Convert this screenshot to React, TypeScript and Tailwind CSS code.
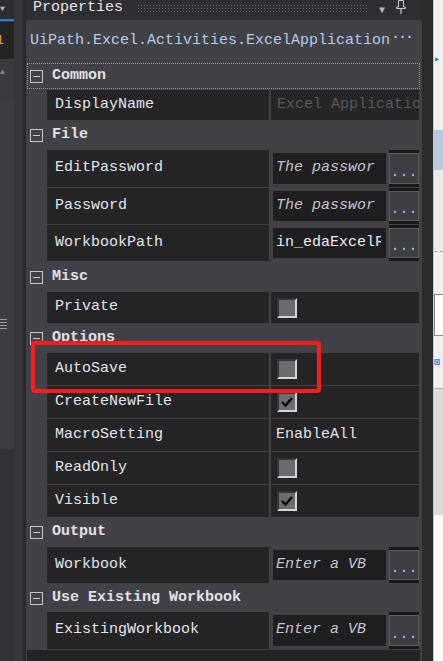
import React from "react";

const mono = { fontFamily: '"Liberation Mono", "DejaVu Sans Mono", monospace' };

function Toggle() {
  return (
    <div className="w-[13px] h-[13px] border border-[#c8c8cc] flex items-center justify-center">
      <div className="w-[7px] h-px bg-[#d0d0d4]"></div>
    </div>
  );
}

function Header({ label, h, focus }: { label: string; h: string; focus?: boolean }) {
  return (
    <div className={`shrink-0 flex items-center ${h} ${focus ? "border border-dotted border-[#9a9aa0]" : ""}`}>
      <div className={focus ? "ml-[2px]" : "ml-[3px]"}>
        <Toggle />
      </div>
      <span className="ml-[9px] font-bold text-[#e2e2e6]">{label}</span>
    </div>
  );
}

function Check({ checked }: { checked?: boolean }) {
  return (
    <div className="w-[20px] h-[20px] border-2 border-t-[#36363a] border-l-[#36363a] border-b-[#d4d4d8] border-r-[#d4d4d8] bg-[#6b6b74] flex items-center justify-center">
      {checked && (
        <svg width="14" height="12" viewBox="0 0 14 12">
          <path d="M2 6 L5.5 9.5 L12 2" stroke="#050505" strokeWidth="2.4" fill="none" />
        </svg>
      )}
    </div>
  );
}

function Row({ name, h, children }: { name: string; h: string; children?: React.ReactNode }) {
  return (
    <div className={`shrink-0 flex ${h} pb-px`}>
      <div className="w-[20px]"></div>
      <div className="w-[222px] bg-[#252526] flex items-center pl-[8px] text-[#e4e6ee]">{name}</div>
      <div className="w-[2px]"></div>
      {children}
    </div>
  );
}

function CheckValue({ checked }: { checked?: boolean }) {
  return (
    <div className="w-[148px] bg-[#252526] flex items-center pl-[6px]">
      <Check checked={checked} />
    </div>
  );
}

function TextValue({ text, italic }: { text: string; italic?: boolean }) {
  return (
    <div className="w-[148px] flex">
      <div className="ml-[2px] my-[3px] w-[113px] bg-[#1f1f20] flex items-center pl-[3px] pr-[5px]">
        <span
          className={`block w-full overflow-hidden whitespace-nowrap ${italic ? "italic text-[#c4c6d0]" : "text-[#eceef4]"}`}
        >
          {text}
        </span>
      </div>
      <div className="ml-[3px] w-[30px] bg-[#19191a] py-[3px] flex">
        <div className="flex-1 border border-[#5e5e62] bg-[#3d3d42] flex items-end justify-center pb-[3px] text-[#a8c0dc] leading-none">
          ...
        </div>
      </div>
    </div>
  );
}

export default function App() {
  return (
    <div className="relative flex w-[443px] h-[661px] overflow-hidden bg-[#2d2d30] text-[15px]" style={mono}>
      {/* left strip */}
      <div className="w-[14px] flex flex-col bg-[#3c3c41]">
        <div className="shrink-0 h-[19px] bg-[#2d2d30] flex items-start pt-[5px] text-[8px] text-[#b8b8bc] leading-none">▼</div>
        <div className="shrink-0 h-[2px] bg-[#2f7fd0]"></div>
        <div className="shrink-0 h-[37px] mt-px bg-[#232326] flex items-center text-[13px] text-[#e0a040] -ml-[4px]">1</div>
        <div className="shrink-0 h-[40px] mt-[2px] bg-[#39393e] flex items-start pt-[7px] text-[8px] text-[#8c8c92] leading-none">▲</div>
        <div className="flex-1 flex items-start">
          <div className="mt-[218px] flex flex-col gap-[2px]">
            <div className="w-[7px] h-px bg-[#9a9aa0]"></div>
            <div className="w-[7px] h-px bg-[#9a9aa0]"></div>
            <div className="w-[7px] h-px bg-[#9a9aa0]"></div>
            <div className="w-[7px] h-px bg-[#9a9aa0]"></div>
          </div>
        </div>
        <div className="shrink-0 h-[212px] bg-[#333337]"></div>
      </div>
      <div className="w-[9px] bg-[#36363b]"></div>
      <div className="w-[3px] bg-[#2a2a2e]"></div>

      {/* properties panel */}
      <div className="w-[396px] flex flex-col overflow-hidden bg-[#414148]">
        <div className="shrink-0 h-[20px] bg-[#2f2f33] flex items-start pl-[7px] pr-[8px]">
          <span className="text-[#e6e6ea] leading-[16px]">Properties</span>
          <div className="ml-[14px] mt-[4px] w-[230px] h-[8px] bg-[radial-gradient(#6c6c72_1px,transparent_1px)] bg-[length:3px_3px]"></div>
          <div className="ml-[12px] mt-[6px] text-[10px] leading-none text-[#b8b8bc]">▼</div>
          <svg className="ml-[10px]" width="12" height="15" viewBox="0 0 12 15">
            <path d="M3.5 0.5 H8.5 V7 H10.5 V8.5 H1.5 V7 H3.5 Z" fill="none" stroke="#c8c8cc" strokeWidth="1" />
            <path d="M6 8.5 V14" stroke="#c8c8cc" strokeWidth="1.2" />
          </svg>
        </div>

        <div className="shrink-0 h-[43px] flex items-center pl-[4px] text-[#b8cce6]">
          <span>UiPath.Excel.Activities.ExcelApplication</span>
          <span className="ml-[1px] -mt-[6px] text-[#d8d8e0] tracking-[-2px]">···</span>
        </div>

        <div className="flex-1 flex flex-col pl-px pr-[2px]">
          <Header label="Common" h="h-[26px]" focus />
          <Row name="DisplayName" h="h-[32px] pt-px">
            <div className="w-[148px] bg-[#252526] flex items-center pl-[6px] overflow-hidden whitespace-nowrap text-[#5a5a5e]">
              Excel Application Scope
            </div>
          </Row>

          <Header label="File" h="h-[29px]" />
          <Row name="EditPassword" h="h-[38px]">
            <TextValue text="The passwor" italic />
          </Row>
          <Row name="Password" h="h-[37px]">
            <TextValue text="The passwor" italic />
          </Row>
          <Row name="WorkbookPath" h="h-[37px]">
            <TextValue text="in_edaExcelFile" />
          </Row>

          <Header label="Misc" h="h-[30px]" />
          <Row name="Private" h="h-[32px]">
            <CheckValue />
          </Row>

          <Header label="Options" h="h-[29px]" />
          <Row name="AutoSave" h="h-[33px]">
            <CheckValue />
          </Row>
          <Row name="CreateNewFile" h="h-[33px]">
            <CheckValue checked />
          </Row>
          <Row name="MacroSetting" h="h-[33px]">
            <div className="w-[148px] bg-[#252526] flex items-center pl-[5px] text-[#e4e6ee]">EnableAll</div>
          </Row>
          <Row name="ReadOnly" h="h-[33px]">
            <CheckValue />
          </Row>
          <Row name="Visible" h="h-[33px]">
            <CheckValue checked />
          </Row>

          <Header label="Output" h="h-[29px]" />
          <Row name="Workbook" h="h-[37px]">
            <TextValue text="Enter a VB" italic />
          </Row>

          <Header label="Use Existing Workbook" h="h-[28px]" />
          <Row name="ExistingWorkbook" h="h-[38px]">
            <TextValue text="Enter a VB" italic />
          </Row>
          <div className="shrink-0 h-[20px] bg-[#232325]"></div>
        </div>
      </div>

      {/* right edge of neighbouring window */}
      <div className="w-[11px] bg-[#2b2b2e]"></div>
      <div className="w-[10px] flex flex-col bg-[#f0f0f0] border-l border-[#c8c8c8]">
        <div className="shrink-0 h-[55px]"></div>
        <div className="shrink-0 text-[10px] leading-none text-[#3a68b0]">▸</div>
        <div className="shrink-0 h-[65px]"></div>
        <div className="shrink-0 h-[40px] bg-[#b8c9de]"></div>
        <div className="shrink-0 h-[82px] bg-[#ebebeb] border-b border-dashed border-[#a0a0a8]"></div>
        <div className="shrink-0 h-[42px] mt-[42px] border border-r-0 border-[#8a8a8a] bg-[#ffffff]"></div>
        <div className="shrink-0 mt-[22px] text-[10px] leading-none text-[#3a68c8]">⊠</div>
        <div className="flex-1 mt-[20px] bg-[#dcdcdc] border-t border-[#b0b0b0]"></div>
        <div className="shrink-0 h-[146px] bg-[#fafafa]"></div>
      </div>

      {/* annotation */}
      <div className="absolute left-[31px] top-[341px] w-[290px] h-[52px] border-[4px] border-[#ff1e1e] rounded-[4px]"></div>
    </div>
  );
}
